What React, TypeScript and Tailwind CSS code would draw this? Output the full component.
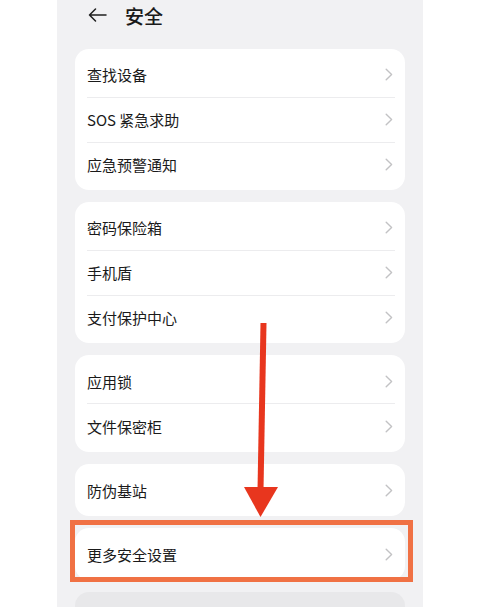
import React from "react";

const GROUPS: { items: string[]; pad: string }[] = [
  { items: ["查找设备", "SOS 紧急求助", "应急预警通知"], pad: "py-[3.5px]" },
  { items: ["密码保险箱", "手机盾", "支付保护中心"], pad: "py-[3.5px]" },
  { items: ["应用锁", "文件保密柜"], pad: "py-[4px]" },
  { items: ["防伪基站"], pad: "py-[4px]" },
  { items: ["更多安全设置"], pad: "py-[4px]" },
];

function Chevron() {
  return (
    <svg width="8" height="13" viewBox="0 0 8 13" fill="none" className="shrink-0">
      <path d="M1.2 1.2 L6.6 6.5 L1.2 11.8" stroke="#c2c2c4" strokeWidth="1.4" strokeLinecap="round" strokeLinejoin="round" />
    </svg>
  );
}

export default function App() {
  return (
    <div
      className="relative w-[480px] h-[607px] overflow-hidden bg-white flex justify-center"
      style={{ fontFamily: "'Noto Sans CJK SC', 'Noto Sans', sans-serif" }}
    >
      {/* ── Phone screen ───────────────────────────── */}
      <div className="w-[366px] h-full bg-[#f1f1f3] flex flex-col overflow-hidden">
        <div className="h-[30px] shrink-0 flex items-center pl-[31px] gap-[18px]">
          <svg width="19" height="14" viewBox="0 0 19 14" fill="none">
            <path d="M18 7 H1.5 M7.5 1 L1.5 7 L7.5 13" stroke="#1f1f1f" strokeWidth="1.5" strokeLinecap="round" strokeLinejoin="round" />
          </svg>
          <span className="text-[19px] font-medium text-[#1a1a1a] leading-none">安全</span>
        </div>

        <div className="shrink-0 flex flex-col gap-[12px] px-[18px] pt-[19px]">
          {GROUPS.map((g, gi) => (
            <div key={gi} className={`bg-white rounded-[14px] ${g.pad}`}>
              {g.items.map((label, i) => (
                <div key={label}>
                  {i > 0 && <div className="h-px bg-[#ececee] ml-[12px] mr-[10px]" />}
                  <div className="h-[44px] flex items-center justify-between pl-[12px] pr-[12px]">
                    <span className="text-[15px] text-[#1a1a1a] leading-none">{label}</span>
                    <Chevron />
                  </div>
                </div>
              ))}
            </div>
          ))}
          <div className="bg-[#e8e8ea] rounded-[14px] h-[53px]" />
        </div>
      </div>

      {/* ── Annotation overlay ─────────────────────── */}
      <div className="absolute left-[70px] top-[520px] w-[343px] h-[62px] border-[5px] border-[#f07144]" />
      <svg className="absolute left-0 top-0" width="480" height="607" viewBox="0 0 480 607">
        <polygon points="260.5,323 266.5,323 263.5,490 257.5,490" fill="#e8361e" />
        <polygon points="244,487 278,487 260.5,517" fill="#e8361e" />
      </svg>
    </div>
  );
}
